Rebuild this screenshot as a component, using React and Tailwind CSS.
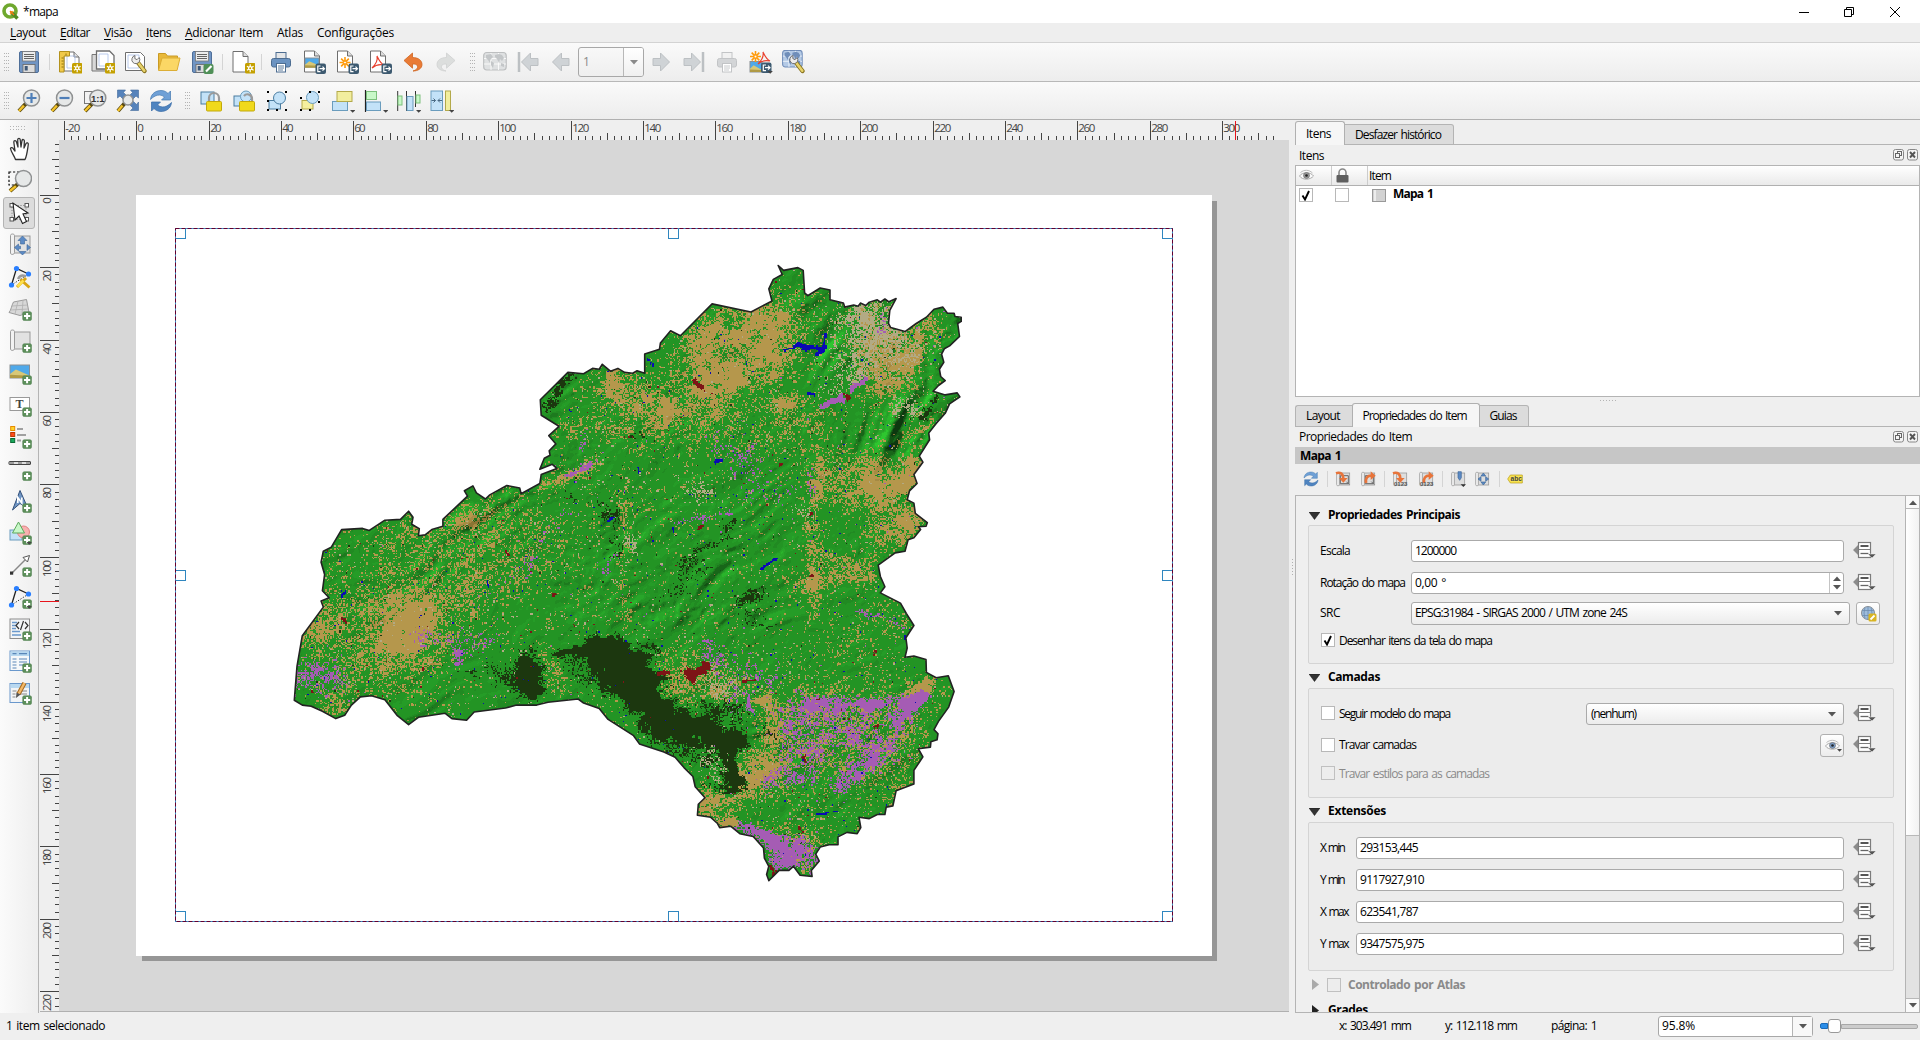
import React, { useLayoutEffect, useMemo, useRef } from 'react';

/* ---------- text fitted to a given width through letter spacing ---------- */
function T({ w, className = '', children }) {
  const ref = useRef(null);
  useLayoutEffect(() => {
    const el = ref.current;
    if (!el || !w) return;
    el.style.letterSpacing = '0px';
    const natural = el.getBoundingClientRect().width;
    const n = el.textContent.length;
    el.style.letterSpacing = (w - natural) / n + 'px';
  }, [w]);
  return <span ref={ref} className={'inline-block whitespace-pre [word-spacing:1.3px] ' + className}>{children}</span>;
}

/* ---------- shared icon parts ---------- */
const Svg = ({ s = 24, children, className = '' }) => (
  <svg width={s} height={s} viewBox="0 0 24 24" fill="none" className={'shrink-0 ' + className}>{children}</svg>
);
const Star = ({ x = 14, y = 13 }) => (
  <g transform={`translate(${x} ${y})`}>
    <rect width="10.5" height="10.5" rx="1.5" fill="#c4a000" />
    <path d="M5.2 1.3v8M1.9 3.2l6.7 4M8.6 3.2l-6.7 4" stroke="#fff" strokeWidth="1.2" />
    <circle cx="5.2" cy="5.2" r="2.1" fill="#fff" /><circle cx="5.2" cy="5.2" r="1" fill="#c4a000" />
  </g>
);
const Plus = ({ x = 14.5, y = 14.5 }) => (
  <g transform={`translate(${x} ${y})`}>
    <rect x=".2" y=".2" width="8.8" height="8.8" rx="1.5" fill="#5c8f5a" stroke="#4b7d4a" strokeWidth=".5" />
    <path d="M4.6 1.5v6.2M1.5 4.6h6.2" stroke="#fff" strokeWidth="2" />
  </g>
);
const Exp = ({ x = 13.5, y = 13.5 }) => (
  <g transform={`translate(${x} ${y})`}>
    <rect width="10.5" height="10.5" rx="2" fill="#3d5a70" />
    <path d="M5 2.5H2.3v5.6H5M4 5.2h5M7 3.2l2 2-2 2" stroke="#fff" strokeWidth="1.2" />
  </g>
);
const Lens = ({ cx = 14.5, cy = 9, r = 8 }) => (
  <g>
    <path d={`M${cx - r * 0.7} ${cy + r * 0.7}L2 22`} stroke="#5a4a10" strokeWidth="4" />
    <path d={`M${cx - r * 0.7 - 2} ${cy + r * 0.7 + 2}L2 22`} stroke="#f4c32a" strokeWidth="2.4" />
    <circle cx={cx} cy={cy} r={r} fill="#e6e8e8" stroke="#8f9192" strokeWidth="1.5" />
  </g>
);
const Page = ({ x = 3, y = 1, w = 15, h = 21 }) => (
  <g>
    <path d={`M${x} ${y}h${w - 5}l5 5v${h - 5}h-${w}z`} fill="#fff" stroke="#6e6e6e" />
    <path d={`M${x + w - 5} ${y}v5h5`} fill="#ddd" stroke="#6e6e6e" />
  </g>
);
const Drop = ({ x = 19, y = 21 }) => <path d={`M${x} ${y}h5.4l-2.7 2.8z`} fill="#444" />;

const Wrench = () => (
  <g>
    <path d="M13.5 12l7 9" stroke="#8a7420" strokeWidth="4.4" strokeLinecap="round" />
    <path d="M14 12.5l6.3 8.2" stroke="#e8d36a" strokeWidth="2.6" strokeLinecap="round" />
    <path d="M8 8.5a4 4 0 0 1 3-3l-.2 3 2.2 1.2 2.2-2.2a4 4 0 1 1-7.200 1z" fill="#ececec" stroke="#666" strokeWidth=".9" />
  </g>
);
const Floppy = () => (
  <g>
    <rect x="2.5" y="1.500" width="19" height="21" rx="1.500" fill="#7095c4" stroke="#4f6f99" />
    <rect x="5.500" y="1.500" width="13" height="9.500" fill="#eceded" stroke="#777" strokeWidth=".8" />
    <path d="M7 4.500h10M7 6.500h10M7 8.500h10" stroke="#555" strokeWidth=".9" />
    <rect x="6" y="14.500" width="12" height="8" fill="#dcdcdc" stroke="#666" strokeWidth=".8" />
    <rect x="7.700" y="16" width="3" height="4.500" fill="#3e5877" />
  </g>
);
const Refresh = () => (
  <g>
    <path d="M1.500 10.500C2 4.500 7 1.500 12 1.500c3.500 0 5.500 1.500 7 3l2.500-2.500V11h-9l3-3C11 4.500 6 6 1.500 10.500z" fill="#6fa0d6" stroke="#4478b0" strokeWidth=".7" />
    <path d="M22.500 13.500c-.5 6-5.500 9-10.500 9-3.500 0-5.500-1.500-7-3L2.500 22v-9h9l-3 3c4.500 3.500 9.500 2 14-2.500z" fill="#4f84c0" stroke="#386ca6" strokeWidth=".7" />
  </g>
);
const Landscape = ({ x, y, w, h }) => (
  <g>
    <rect x={x} y={y} width={w} height={h} fill="#4fa9ea" stroke="#8a8f94" />
    <path d={`M${x} ${y + h * 0.7}L${x + w * 0.3} ${y + h * 0.35}L${x + w} ${y + h * 0.8}V${y + h}H${x}z`} fill="#d8c877" />
    <path d={`M${x} ${y + h * 0.75}L${x + w} ${y + h * 0.82}V${y + h}H${x}z`} fill="#b09a45" />
  </g>
);
const MapGrid = ({ c1, c2, c3 }) => (
  <g>
    <rect x=".7" y="2.500" width="22.500" height="17.500" rx="3" fill={c1} stroke={c2} strokeWidth="1.200" />
    <path d="M8 3v17M15.500 3v17M1 8.500h22M1 14h22" stroke="#fff" strokeWidth=".8" />
    <path d="M3 5l5-1 2 3-3 3v3l-2-3-2-2zM8 11l3 2-1 5-2-3zM12 5l4-1 3 1 2 3-2 3-2-2-1 4-2-4-2-2zM18 13l3 1v3l-3-1z" fill={c3} />
  </g>
);
const Arrow = ({ dir, bar }) => (
  <g transform={dir === 'r' ? 'translate(24 0) scale(-1 1)' : undefined}>
    <path d="M3.500 12l9-9v5.500h7.500v7h-7.500V21z" fill="#cfd3d6" stroke="#bcc0c3" strokeWidth="1" transform={bar ? 'translate(2 0)' : undefined} />
    {bar && <path d="M3 2v20" stroke="#bcc0c3" strokeWidth="2.500" />}
  </g>
);
const Printer = ({ a, b, c }) => (
  <g>
    <rect x="7" y="2.500" width="10" height="8" fill={c} stroke={b} />
    <rect x="2.500" y="8.500" width="19" height="8.500" rx="2" fill={a} stroke={b} />
    <rect x="7.500" y="13.500" width="9" height="8.500" fill="#fff" stroke={b} />
    <path d="M9 16h6M9 18h6M9 20h5" stroke={b} strokeWidth=".9" />
  </g>
);
const Nodes = () => (
  <g>
    <path d="M3.500 20L8.500 3.500L20.500 9" stroke="#222" strokeWidth="1.300" />
    <path d="M20.500 9L3.500 20" stroke="#222" strokeDasharray="1.200 1.600" />
    <g fill="#2a7fff"><circle cx="3.500" cy="20" r="2.600" /><circle cx="8.500" cy="3.500" r="2.600" /><circle cx="20.500" cy="9" r="2.600" /></g>
  </g>
);
const Scroll = () => (
  <g>
    <rect x="4.500" y="3" width="17.500" height="17" fill="#e2e2e2" stroke="#9a9a9a" />
    <path d="M2.500 2.500c0-2 4-2 4 0v17c0 2.500-4 2.500-4 .5z" fill="#f2f2f2" stroke="#9a9a9a" />
  </g>
);
const Dots = ({ at }) => <g fill="#000">{at.map(([x, y]) => <rect key={x + '-' + y} x={x} y={y} width="2" height="2" />)}</g>;
const Burst = ({ x, y, r }) => (
  <g transform={`translate(${x} ${y}) scale(${r / 6})`}>
    <path d="M0-6V6M-6 0H6M-4.200-4.200l8.400 8.400M4.200-4.200l-8.400 8.400" stroke="#ff9a0a" strokeWidth="1.700" /><circle r="1.500" fill="#fff" stroke="#ff9a0a" />
  </g>
);
const Acro = ({ x, y }) => (
  <path transform={`translate(${x} ${y})`} d="M5 0c2 4 3 7 7 9-4-1-8-.5-12 3 3-3 6-8 5-12z" stroke="#e8402e" strokeWidth="1.200" />
);

/* ---------- toolbar icons ---------- */
const I = {
  save: <Floppy />,
  newLayout: <><Page x={6} y={2} w={15} h={19} /><path d="M9 6h8v12H9z" stroke="#a9bfe8" strokeWidth=".8" /><path d="M1.500 1.500h10v4.500H6v16H1.500z" fill="#f0c94a" stroke="#b4921c" /><path d="M3.500 8h2M3.500 11h2M3.500 14h2M3.500 17h2M8 3.500v2" stroke="#7a6000" strokeWidth=".8" /><Star /></>,
  duplicate: <><path d="M1 4.500h16V21H1z" fill="#d8d8d8" stroke="#777" /><path d="M5.500 1h13l4.500 4.500V19H5.500z" fill="#fff" stroke="#6e6e6e" strokeWidth="1.300" /><path d="M8 4h9v12H8z" stroke="#a9bfe8" strokeWidth=".8" /><Star /></>,
  manager: <><path d="M1.500 2.500h15l4 4v14h-19z" fill="#fff" stroke="#6e6e6e" /><path d="M4 5h11v13H4z" stroke="#a9bfe8" strokeWidth=".8" /><Wrench /></>,
  open: <><path d="M1.500 20V3.500h7l2 2.500h10V10" fill="#e9b93a" stroke="#c99a24" /><path d="M1.500 20.500L5 8h18l-3 12.500z" fill="#fbd765" stroke="#dcae35" /></>,
  saveTpl: <><Floppy /><rect x="13.500" y="14" width="10" height="10" rx="2" fill="#4f8f57" /><path d="M16 21.500l5.500-5.500" stroke="#fff" strokeWidth="2.200" /></>,
  addPage: <><Page x={2} y={1.500} w={15} h={20.500} /><Star /></>,
  print: <Printer a="#6b93c1" b="#4d6d91" c="#e4e6e8" />,
  image: <><Page x={2.500} /><Landscape x={3} y={8} w={14} h={9.500} /><Exp /></>,
  svg: <><Page x={2.500} /><Burst x={10} y={12.500} r={5.500} /><Exp /></>,
  pdf: <><Page x={2.500} /><Acro x={4} y={6} /><Exp /></>,
  undo: <path d="M3 10.500L11.500 3v4.500c6 0 9.500 3 9.500 7 0 4-4 6.500-9 6.500 3.500-1 5-3 4.500-5-.4-1.700-2.500-2-5-2v4.200z" fill="#e97b36" stroke="#cf6420" strokeWidth=".8" />,
  redo: <path transform="translate(24 0) scale(-1 1)" d="M3 10.500L11.500 3v4.500c6 0 9.500 3 9.500 7 0 4-4 6.500-9 6.500 3.500-1 5-3 4.500-5-.4-1.700-2.500-2-5-2v4.200z" fill="#dcdedd" stroke="#cfd1d0" strokeWidth=".8" />,
  atlas: <MapGrid c1="#dfe1e2" c2="#bdbfc0" c3="#c3c6c8" />,
  first: <Arrow dir="l" bar />, prev: <Arrow dir="l" />, next: <Arrow dir="r" />, last: <Arrow dir="r" bar />,
  printOff: <Printer a="#d3d5d7" b="#c2c4c6" c="#f1f1f1" />,
  exportAtlas: <><Landscape x={1} y={11.500} w={12} h={10.500} /><Burst x={6.500} y={6.500} r={5.500} /><Acro x={9} y={2} /><Exp x={12} y={12.500} /><Drop x={18.500} y={21} /></>,
  atlasCfg: <><g transform="translate(0 -2) scale(.87 .95)"><MapGrid c1="#b4cae6" c2="#6f8cb8" c3="#6f8eba" /></g><Wrench /></>,
  zin: <><Lens /><path d="M14.500 4v10M9.500 9h10" stroke="#4f7fb8" strokeWidth="2.200" /></>,
  zout: <><Lens /><path d="M9.500 9h10" stroke="#4f7fb8" strokeWidth="2.200" /></>,
  z11: <><rect x="1.500" y="2.500" width="14" height="12" fill="#f2f2f2" stroke="#777" /><Lens cx={14.800} /><text x="14.800" y="12.600" textAnchor="middle" fontSize="9.500" fontWeight="700" fontFamily="Liberation Sans, sans-serif" fill="#333">1:1</text></>,
  zfull: <><g fill="#5683bb" stroke="#42699a" strokeWidth=".6"><path d="M1.500 1h8L7.500 3.500l3 3L7 10 4 7 1.500 9zM22.500 1v8L20 7l-3 3-3.500-3.500 3-3L14.500 1zM22.500 21.500h-8l2.500-2.500-3-3 3.500-3.500 3 3 2-2.500z" /></g><Lens cx={12} cy={11} r={5} /></>,
  refresh: <Refresh />,
  lock: <><rect x="2" y="3" width="13" height="12" fill="#c3e2f8" stroke="#4a7ca0" /><path d="M10 13V9a5 5 0 0 1 10 0v4" stroke="#9a9a9a" strokeWidth="2.200" /><rect x="7.500" y="12.500" width="15" height="9.500" rx="1" fill="#f0d91c" stroke="#c2a90a" /></>,
  unlock: <><rect x="2" y="7" width="9" height="10" fill="#c3e2f8" stroke="#4a7ca0" /><circle cx="14" cy="7.500" r="5.500" fill="#c3e2f8" stroke="#6a9cbd" /><path d="M20 13V10a4.500 4.500 0 0 0-8-3" stroke="#9a9a9a" strokeWidth="2.200" /><rect x="7.500" y="12.500" width="15" height="9.500" rx="1" fill="#f0d91c" stroke="#c2a90a" /></>,
  group: <><rect x="4" y="11.500" width="11.500" height="8.500" fill="#c3e2f8" stroke="#4a7ca0" /><circle cx="14.500" cy="9" r="6" fill="#c3e2f8" stroke="#4a7ca0" /><Dots at={[[2, 2], [20, 2], [2, 20], [11, 20], [20, 20], [2, 11]]} /></>,
  ungroup: <><rect x="4" y="11.500" width="11" height="8.500" fill="#f4ef9e" stroke="#b3a94a" /><circle cx="14.500" cy="8.500" r="6" fill="#c3e2f8" stroke="#6a9cbd" /><Dots at={[[11, 2], [20, 2], [20, 12], [2, 8], [2, 20], [11, 20]]} /></>,
  raise: <><rect x="1.500" y="12.500" width="15" height="9" fill="#c3e2f8" stroke="#6a9cbd" /><rect x="6" y="2.500" width="15" height="10" fill="#f2ee9e" stroke="#b3a94a" /><Drop /></>,
  align: <><path d="M1.500 1v22" stroke="#222" strokeWidth="1.200" /><rect x="2.500" y="2.500" width="10" height="8" fill="#c8f8c8" stroke="#7cc07c" /><rect x="2.500" y="13" width="14" height="8.500" fill="#c3e2f8" stroke="#6a9cbd" /><Drop /></>,
  dist: <><path d="M.7 2v20M9.500 2v20M18.500 2v16" stroke="#333" /><rect x="1" y="7" width="4" height="9" fill="#c8f8c8" stroke="#7cc07c" /><rect x="10" y="7.500" width="6" height="14" fill="#c3e2f8" stroke="#6a9cbd" /><rect x="19" y="6" width="4" height="8" fill="#c8f8c8" stroke="#7cc07c" /><Drop /></>,
  resize: <><rect x="1" y="2" width="11.500" height="19.500" fill="#c3e2f8" stroke="#6a9cbd" /><rect x="15.500" y="2" width="5" height="19.500" fill="#f2ee9e" stroke="#b3a94a" /><path d="M1.500 11.500h4M3.500 9.500l2 2-2 2M12 11.500H8M10 9.500l-2 2 2 2" stroke="#4a6a84" /><Drop /></>,
  hand: <path d="M7.500 22.500C6.500 19 3 15 2.500 11.500c.3-1.500 2.200-1 3 .5l1.500 2L5.800 5c0-1.800 2.200-1.900 2.600-.2L10 10l-.3-7.500c.2-1.500 2.300-1.500 2.500 0L13 10l1-6.500c.4-1.500 2.400-1.200 2.400.4L16 11l2-4.500c.8-1.300 2.600-.5 2.300 1-.8 5-1.300 11-3.300 15z" fill="#fff" stroke="#333" strokeWidth="1.300" strokeLinejoin="round" />,
  zoomBox: <><rect x="1" y="3" width="14" height="13" stroke="#111" strokeDasharray="2.200 1.800" strokeWidth="1.200" /><Lens cx={15.500} cy={9.500} r={8} /></>,
  select: <><rect x="4" y="4.500" width="14" height="14" stroke="#888" strokeDasharray="1.200 1.600" /><g fill="#fff" stroke="#555"><rect x="2" y="2.500" width="3.500" height="3.500" /><rect x="17" y="2.500" width="3.500" height="3.500" /><rect x="2" y="16.500" width="3.500" height="3.500" /><rect x="17" y="16.500" width="3.500" height="3.500" /></g><path d="M5 2l2 17 4-4 3.500 7.500 4-2L15 13l5-1z" fill="#fff" stroke="#222" strokeWidth="1.100" /></>,
  moveContent: <><Scroll /><path d="M14.500 3l4.500 4.500h-2.500V11h-4V7.500H10zM6.500 14.500l4-3.500v2.200h2v2.600h-2V18zM22.500 14.500l-3.500-3v6zM14.500 22l-3.500-3.500h7z" fill="#5c8ac4" stroke="#3c6698" strokeWidth=".6" /></>,
  editNodes: <><Nodes /><path d="M9 22l9-9M12.500 14.500l9 8" stroke="#d9a514" strokeWidth="3" /><path d="M9.500 21.500l6-6" stroke="#ffe04a" strokeWidth="2.600" /><path d="M10 14c2-4 5-4 8-2.500" stroke="#9a9a9a" strokeWidth="2.400" /></>,
  map3d: <><path d="M5.500 5l13-2.500L21 15.500l-9 3-11-3c2-2 2.500-7 4.500-10.500z" fill="#d8d8d8" stroke="#9a9a9a" /><path d="M4 9l16-1M2.500 13l18-1M10 4L7 17M15 3.500L14 17" stroke="#b0b0b0" strokeWidth=".8" /><Plus /></>,
  addMap: <><Scroll /><Plus /></>,
  picture: <><Landscape x={2} y={4} w={19.500} h={13} /><Plus /></>,
  label: <><rect x="2" y="4.500" width="19.500" height="13" fill="#fff" stroke="#999" /><text x="11.500" y="15" textAnchor="middle" fontSize="12" fontFamily="Liberation Serif, serif" fontWeight="700" fill="#444">T</text><Plus /></>,
  legend: <><rect x="2.700" y="1.500" width="4" height="4" fill="#ffd42a" stroke="#e88a00" /><rect x="2.700" y="7.500" width="4" height="4" fill="#ff4a1a" stroke="#b83a00" /><rect x="2.700" y="13.500" width="4" height="4" fill="#18a85a" stroke="#0a6a34" /><path d="M9 4h6M9 10h9M9 15.500h4" stroke="#a0a0a0" strokeWidth="1.800" /><Plus /></>,
  scalebar: <><rect x="1" y="4.500" width="21.500" height="3" rx=".5" fill="#ddd" stroke="#444" /><path d="M2 6h4M10 6h4M18 6h4" stroke="#8a8a8a" strokeWidth="1.600" /><Plus /></>,
  north: <><path d="M12 1.500l8 18-8-5-7.500 6.500z" fill="#6f95c4" stroke="#33507a" /><path d="M9.800 14V8.500l4 5.500V8.500" stroke="#fff" strokeWidth="1.600" /><Plus /></>,
  shape: <><rect x="2" y="9" width="12" height="10" fill="#c3e2f8" stroke="#6a9cbd" /><circle cx="15.500" cy="11" r="6" fill="#f8b0b0" stroke="#e08080" /><path d="M10.500 1l6 11h-12z" fill="#c8f8c8" stroke="#5ca85c" /><Plus /><Drop x={18.500} y={21} /></>,
  arrow: <><path d="M4 20L20 4" stroke="#888" strokeWidth="1.500" /><path d="M21.500 2.500l-6.500 2 4.500 4.500z" fill="#fff" stroke="#555" /><rect x="2" y="18.500" width="3.200" height="3.200" fill="#333" /><Plus /></>,
  addNode: <><Nodes /><Plus /><Drop x={18.500} y={21} /></>,
  html: <><rect x="2" y="2" width="19.500" height="19.500" fill="#f2f4f6" stroke="#8c8c8c" /><path d="M4 5.500h5M4 8.500h5M4 11.500h4M4 14.500h8M4 18h9" stroke="#6a98cc" strokeWidth="1.500" /><path d="M11 5L8 8.500l3 3.500M17 5l3 3.500-3 3.500M15.500 4l-3 9" stroke="#333" strokeWidth="1.200" /><Plus /></>,
  table: <><rect x="2" y="2" width="19.500" height="19.500" fill="#f6f8fa" stroke="#6a98cc" /><rect x="2.500" y="2.500" width="18.500" height="4.500" fill="#b8d8f0" /><path d="M4.500 4.700h4M11 4.700h8M4.500 10h4M11 10h8M4.500 13h4M11 13h8M4.500 16h4M11 16h5M4.500 19h4" stroke="#5a86b8" strokeWidth="1.200" /><Plus /></>,
  manual: <><rect x="2" y="2.500" width="19.500" height="19" fill="#f2f4f6" stroke="#6a98cc" /><rect x="2.500" y="3" width="18.500" height="4" fill="#b8d8f0" /><path d="M4.500 10h4M4.500 13h3M12 10h7M12 13h7M4.500 16h3" stroke="#888" strokeWidth="1.100" /><path d="M16.500 2l-6 11" stroke="#a66a20" strokeWidth="4.500" /><path d="M16.500 2l-6 11" stroke="#f2b868" strokeWidth="2.400" /><path d="M8.500 11.500l4 2-4.500 3.500z" fill="#555" /><Plus /></>,
};

const Cell = ({ n }) => <div className="flex w-[33px] shrink-0 items-center justify-center"><Svg>{I[n]}</Svg></div>;
const Sep = ({ w }) => <div className={'flex shrink-0 justify-center ' + w}><div className="h-4 w-px bg-[#d4d4d4]" /></div>;
const Grip = ({ className = '' }) => (
  <div className={'grid h-[18px] shrink-0 grid-cols-3 content-between ' + className}>
    {Array.from({ length: 18 }, (_, i) => <div key={i} className="size-px bg-[#b4b4b4]" />)}
  </div>
);

/* ---------- rulers ---------- */
function Rulers() {
  const hor = [];
  for (let v = -20; v <= 314; v += 2) hor.push(v);
  const ver = [];
  for (let v = -14; v <= 224; v += 2) ver.push(v);
  const len = (v) => (v % 20 === 0 ? 19 : v % 10 === 0 ? 7 : 4);
  return {
    top: (
      <svg width="1249" height="19" viewBox="40 121 1249 19" className="block shrink-0">
        {hor.map((v) => {
          const x = Math.floor(136.700 + v * 3.620) + 0.5;
          return <g key={v}>
            <path d={`M${x} ${140 - len(v)}V140`} stroke="#444" />
            {v % 20 === 0 && <text x={x + 0.8} y="132" fontSize="11.500" textLength={v < 0 ? 15 : String(v).length * 5.700} fontFamily="'Open Sans', sans-serif" fill="#444">{v}</text>}
          </g>;
        })}
        <path d="M1235.500 121v19" stroke="#e8141c" />
      </svg>
    ),
    left: (
      <svg width="19" height="871" viewBox="40 140 19 871" className="block shrink-0">
        {ver.map((v) => {
          const y = Math.floor(195.300 + v * 3.620) + 0.5;
          return <g key={v}>
            <path d={`M${59 - len(v)} ${y}H59`} stroke="#444" />
            {v % 20 === 0 && <text transform={`translate(51 ${y + 2.500 + String(v).length * 5.700}) rotate(-90)`} fontSize="11.500" textLength={String(v).length * 5.700} fontFamily="'Open Sans', sans-serif" fill="#444">{v}</text>}
          </g>;
        })}
        <path d="M40 601.500h19" stroke="#e8141c" />
      </svg>
    ),
  };
}

/* ---------- raster map: land cover over shaded relief ---------- */
const OUT = '1116,38 1128,50 1160,43 1172,50 1175,105 1182,112 1210,93 1232,98 1232,122 1262,130 1265,140 1285,135 1295,138 1300,130 1312,136 1320,128 1338,122 1345,128 1355,120 1364,127 1380,119 1366,148 1363,180 1368,190 1400,200 1425,180 1448,165 1465,145 1485,140 1495,155 1510,155 1512,163 1526,165 1526,175 1518,180 1522,212 1500,235 1488,242 1482,255 1487,275 1477,292 1480,310 1490,320 1475,332 1463,346 1490,355 1517,350 1523,360 1500,377 1490,400 1470,425 1453,448 1455,465 1432,505 1440,520 1420,550 1427,572 1410,590 1405,612 1420,620 1423,645 1450,668 1447,677 1430,678 1435,685 1420,705 1407,710 1400,738 1378,742 1340,772 1345,800 1355,825 1345,840 1390,865 1403,890 1420,920 1402,950 1405,975 1400,998 1420,995 1447,1003 1448,1035 1470,1048 1497,1043 1510,1082 1498,1120 1475,1155 1465,1175 1474,1185 1472,1200 1458,1205 1457,1218 1430,1222 1440,1242 1420,1275 1420,1308 1380,1325 1373,1362 1358,1365 1355,1383 1338,1383 1320,1393 1297,1390 1301,1415 1293,1430 1270,1427 1250,1438 1250,1457 1230,1457 1210,1463 1200,1480 1208,1497 1190,1520 1192,1535 1165,1532 1150,1510 1140,1520 1118,1520 1095,1545 1090,1530 1095,1510 1085,1490 1083,1465 1060,1437 1030,1430 1010,1412 985,1415 980,1405 965,1390 935,1385 937,1358 952,1342 930,1315 925,1290 905,1268 885,1243 860,1230 805,1210 792,1190 735,1150 715,1123 680,1110 668,1100 600,1108 575,1115 530,1115 505,1122 435,1132 418,1152 385,1148 370,1135 310,1145 288,1163 262,1140 235,1102 205,1092 180,1095 160,1115 145,1140 125,1148 95,1130 70,1118 50,1115 32,1103 38,1020 50,945 97,875 92,860 110,852 95,835 100,795 92,765 97,738 115,728 138,685 185,682 200,687 235,662 270,660 288,640 298,655 295,672 312,683 310,700 325,698 340,685 365,677 365,660 420,603 413,590 432,578 440,595 460,610 470,600 508,577 537,583 540,597 582,572 585,550 620,535 610,525 582,537 592,510 605,503 603,492 618,475 602,455 625,432 585,405 583,367 645,300 680,303 700,290 715,292 722,280 740,297 757,290 772,300 790,302 800,296 817,302 817,255 850,243 852,228 875,198 897,210 968,132 1055,152 1102,125 1095,95 1105,72 1125,60';
const POLY = OUT.split(' ').map((p) => { const [a, b] = p.split(',').map(Number); return [a / 2.24, b / 2.45]; });

// capsules: x1, y1, x2, y2, radius, peak
const TAN = [[960, 290, 1090, 190, 75, 0.8], [940, 200, 1080, 170, 45, 0.4], [740, 320, 745, 350, 32, 0.8], [830, 370, 940, 370, 55, 0.6], [1000, 330, 1080, 300, 50, 0.5], [1340, 170, 1350, 300, 55, 0.7], [1400, 270, 1440, 190, 30, 0.8], [1390, 560, 1415, 530, 28, 0.9], [1230, 560, 1300, 560, 55, 0.55], [1320, 590, 1400, 640, 45, 0.6], [1350, 700, 1390, 690, 40, 0.45], [1130, 380, 1150, 370, 22, 0.7], [1200, 400, 1190, 900, 14, 0.4], [1150, 810, 1320, 790, 28, 0.5], [1180, 740, 1330, 780, 12, 0.35], [80, 910, 280, 940, 80, 0.5], [200, 1000, 330, 880, 80, 0.3], [420, 650, 425, 665, 20, 0.7], [300, 850, 560, 720, 110, 0.28], [590, 580, 720, 515, 12, 0.7], [960, 1350, 1090, 1280, 38, 0.85], [1180, 1180, 1320, 1200, 130, 0.45], [1400, 1090, 1440, 1060, 16, 0.8], [1380, 470, 1460, 420, 12, 0.8], [985, 1400, 1010, 1400, 15, 0.8], [130, 1090, 110, 1120, 30, 0.4], [880, 1050, 1000, 1080, 60, 0.45], [436, 870, 436, 890, 6, 1.300], [1130, 1440, 1190, 1480, 40, 0.4], [600, 970, 600, 1060, 14, 0.5], [640, 440, 860, 400, 30, 0.4], [770, 560, 770, 900, 14, 0.3], [840, 440, 1180, 440, 60, 0.22], [250, 700, 500, 640, 50, 0.22], [1240, 950, 1380, 900, 40, 0.2], [1090, 1090, 1110, 1200, 18, 0.4], [300, 900, 300, 1100, 60, 0.15]];
const GREY = [[1310, 160, 1350, 160, 50, 0.75], [1280, 230, 1400, 240, 60, 0.45], [960, 1250, 980, 1270, 30, 0.6], [780, 700, 785, 730, 14, 0.6], [930, 580, 950, 600, 24, 0.55], [1240, 340, 1300, 290, 30, 0.5], [980, 1060, 1000, 1070, 45, 0.4], [1400, 380, 1410, 385, 22, 0.6], [1170, 630, 1190, 640, 16, 0.5]];
const PUR = [[50, 1040, 110, 1040, 38, 0.8], [1180, 1110, 1320, 1110, 22, 0.85], [1320, 1110, 1440, 1095, 13, 0.9], [1380, 1150, 1440, 1090, 15, 1.300], [1150, 1150, 1180, 1240, 55, 0.55], [1260, 1180, 1350, 1200, 60, 0.55], [1260, 1310, 1320, 1250, 25, 0.9], [1090, 1300, 1180, 1290, 22, 0.7], [1105, 1450, 1130, 1490, 27, 1.350], [1030, 1410, 1090, 1430, 13, 1.300], [1160, 1460, 1190, 1490, 28, 0.7], [1216, 377, 1250, 360, 9, 2.500], [1280, 340, 1303, 320, 8, 1.800], [1045, 1080, 1058, 1135, 7, 1.500], [1000, 1010, 1100, 1040, 35, 0.45], [980, 480, 1060, 520, 40, 0.36], [890, 665, 1000, 650, 8, 0.75], [1060, 600, 1130, 590, 40, 0.26], [395, 980, 398, 1010, 12, 0.8], [320, 950, 460, 960, 30, 0.35], [1005, 1130, 1020, 1080, 18, 0.6], [640, 550, 710, 520, 6, 0.9], [1340, 190, 1366, 140, 8, 0.8], [725, 790, 750, 740, 6, 0.8], [1195, 530, 1190, 600, 8, 0.6], [950, 970, 960, 1000, 25, 0.5], [550, 790, 575, 750, 8, 0.7], [1290, 880, 1400, 920, 6, 0.6], [680, 440, 680, 490, 6, 0.7], [640, 640, 420, 900, 12, 0.25]];
const DRK = [[640, 978, 730, 972, 15, 1.600], [745, 1000, 800, 1060, 38, 2.600], [800, 1085, 835, 1130, 26, 2.600], [850, 1165, 970, 1185, 20, 2.600], [985, 1195, 1030, 1190, 14, 1.500], [1000, 1225, 1020, 1310, 20, 0.95], [550, 1000, 560, 1060, 28, 1.150], [480, 1030, 540, 1080, 32, 0.5], [640, 1020, 720, 1060, 34, 0.36], [960, 1120, 1030, 1140, 30, 0.5], [850, 1200, 960, 1250, 28, 0.42], [640, 600, 740, 620, 26, 0.32], [745, 640, 750, 750, 15, 0.45], [890, 790, 1010, 690, 20, 0.55], [1030, 850, 1060, 840, 20, 0.65], [1040, 900, 1100, 920, 18, 0.45], [595, 370, 640, 320, 16, 0.7], [820, 960, 840, 985, 18, 0.55], [1420, 410, 1470, 370, 12, 0.8], [960, 1310, 1010, 1300, 16, 0.55], [870, 1120, 920, 1150, 14, 0.5], [780, 450, 840, 455, 8, 0.4], [840, 850, 960, 790, 20, 0.4], [425, 1030, 430, 1038, 6, 0.9], [1090, 1150, 1110, 1200, 12, 0.4], [700, 1000, 1010, 1190, 50, 0.25]];
const BLU = [[1125, 240, 1160, 232, 2.500, 1.500], [1155, 230, 1180, 242, 4.500, 2], [1180, 240, 1212, 242, 4.500, 2], [1200, 255, 1216, 240, 4.500, 2], [1214, 235, 1215, 205, 3.500, 1.800], [1182, 350, 1193, 354, 5, 2], [973, 516, 988, 510, 4, 3], [1080, 778, 1086, 766, 3, 2], [1086, 766, 1108, 754, 2.500, 3], [822, 265, 828, 285, 6, 0.9], [802, 530, 802, 542, 2.500, 2], [143, 832, 140, 845, 3, 2], [1200, 1382, 1245, 1375, 3, 1], [735, 660, 740, 652, 3, 2], [880, 675, 882, 685, 3, 1.500], [461, 805, 463, 820, 3, 1.200], [1397, 940, 1398, 950, 3, 2]];
const RED = [[928, 315, 944, 332, 8, 1.500], [918, 1040, 945, 1020, 12, 1.200], [848, 1040, 862, 1030, 8, 0.9], [925, 1050, 938, 1100, 8, 0.6], [860, 1035, 960, 1035, 16, 0.42], [1040, 1048, 1062, 1048, 5, 0.9], [1266, 356, 1270, 360, 5, 2.200], [132, 905, 140, 907, 5, 1.200], [938, 677, 945, 677, 5, 1.200], [1172, 1238, 1176, 1250, 5, 1.100], [1330, 1158, 1331, 1162, 5, 1.100], [1203, 1100, 1204, 1100, 5, 1.100], [1188, 640, 1189, 645, 4, 1.200], [1118, 522, 1118, 525, 4, 1.200], [72, 1078, 73, 1080, 4, 1.200], [312, 1018, 313, 1020, 4, 1.200], [1102, 1510, 1106, 1530, 6, 0.9], [1326, 985, 1328, 992, 5, 0.9], [1160, 1410, 1161, 1425, 4, 0.9], [510, 742, 511, 744, 3, 1.500], [654, 918, 655, 920, 3, 1.500], [610, 842, 611, 844, 3, 1.500], [770, 454, 790, 456, 3, 0.8], [1185, 800, 1187, 802, 3, 1.500]];

function hash(x, y, s) {
  let h = Math.imul(x, 374761393) + Math.imul(y, 668265263) + Math.imul(s, 1442695041);
  h = Math.imul(h ^ (h >>> 13), 1274126177);
  return ((h ^ (h >>> 16)) >>> 0) / 4294967296;
}
function noise(x, y, s) {
  const xi = Math.floor(x), yi = Math.floor(y);
  let fx = x - xi, fy = y - yi;
  fx = fx * fx * (3 - 2 * fx); fy = fy * fy * (3 - 2 * fy);
  const a = hash(xi, yi, s), b = hash(xi + 1, yi, s), c = hash(xi, yi + 1, s), d = hash(xi + 1, yi + 1, s);
  return a + (b - a) * fx + (c - a) * fy + (a - b - c + d) * fx * fy;
}
function density(list, x, y) {
  let p = 0;
  for (const [x1, y1, x2, y2, r, k] of list) {
    const dx = x2 - x1, dy = y2 - y1;
    let t = ((x - x1) * dx + (y - y1) * dy) / (dx * dx + dy * dy || 1);
    t = t < 0 ? 0 : t > 1 ? 1 : t;
    const ex = x - x1 - t * dx, ey = y - y1 - t * dy;
    const q = (ex * ex + ey * ey) / (r * r);
    if (q < 6) p += k * Math.exp(-q);
  }
  return p;
}
function elevation(x, y, steep) {
  const wx = x + 40 * noise(x / 70, y / 70, 3), wy = y + 44 * noise(x / 64, y / 64, 4);
  const a = steep ? -1.150 : -0.480;
  const c = Math.cos(a), s = Math.sin(a);
  const u = wx * c + wy * s, v = -wx * s + wy * c;
  return 7 * noise(u / 60, v / 13, 5) + 3.600 * noise(u / 20, v / 7, 6) + 2.200 * noise(x / 8, y / 8, 8) + noise(x / 3.500, y / 3.500, 7);
}
const ROUGH = [[600, 520, 900, 420, 60, 0.6], [420, 680, 680, 520, 40, 0.8], [200, 860, 500, 660, 90, 0.4], [640, 860, 760, 700, 50, 0.8], [800, 860, 1060, 740, 80, 0.6], [700, 890, 1050, 880, 30, 0.6], [1180, 120, 1240, 260, 50, 1.100], [1380, 420, 1490, 200, 70, 1.300], [1270, 470, 1430, 470, 50, 1], [900, 440, 1200, 420, 50, 0.3], [1200, 740, 1340, 740, 30, 0.6], [1070, 1160, 1110, 1240, 30, 1], [1280, 1360, 1400, 1200, 60, 0.6], [480, 650, 620, 780, 60, 0.4], [900, 900, 1100, 920, 40, 0.4], [590, 400, 640, 320, 40, 0.7], [880, 640, 1060, 560, 70, 0.3]];
// relief tones, from lit slopes to shaded ones
const GREEN = [[-2.600, '#2ec62f'], [-1.700, '#2ab42b'], [-1, '#28a629'], [-0.45, '#259c27'], [0.45, '#239424'], [1, '#218a22'], [1.700, '#1d7a1e'], [2.600, '#186619'], [3.700, '#125014'], [99, '#0d380f']];

function buildMap() {
  const layers = {};
  const put = (c, x, y, n) => { (layers[c] || (layers[c] = [])).push(`M${x} ${y + 0.5}h${n}`); };
  for (let y = 10; y < 635; y++) {
    const xs = [];
    for (let i = 0; i < POLY.length; i++) {
      const [ax, ay] = POLY[i], [bx, by] = POLY[(i + 1) % POLY.length];
      if ((ay <= y) !== (by <= y)) xs.push(ax + ((y - ay) / (by - ay)) * (bx - ax));
    }
    xs.sort((a, b) => a - b);
    const cy = Math.floor(y * 0.78);
    for (let k = 0; k + 1 < xs.length; k += 2) {
      const x0 = Math.floor(xs[k]), x1 = Math.ceil(xs[k + 1]);
      let run = x0, cur = null, lastCx = -1, cover = null;
      for (let x = x0; x <= x1; x++) {
        let c = null;
        if (x < x1) {
          const cx = Math.floor(x * 0.78);
          const steep = x > 487 && y < 229 && x * 2.24 + (560 - y * 2.45) * 0.3 > 1180;
          if (cx !== lastCx) {
            lastCx = cx;
            const X = cx * 2.872, Y = cy * 3.141;
            const ox = noise(cx / 9, cy / 9, 61) + 0.5 * noise(cx / 3, cy / 3, 62) - 0.75;
            const oy = noise(cx / 9, cy / 9, 63) + 0.5 * noise(cx / 3, cy / 3, 64) - 0.75;
            const WX = X + ox * 34, WY = Y + oy * 34;
            const n1 = 0.4 * noise(cx / 1.900, cy / 1.900, 21) + 0.6 * hash(cx, cy, 11);
            const n2 = 0.4 * noise(cx / 1.900, cy / 1.900, 31) + 0.6 * hash(cx, cy, 12);
            const n3 = 0.35 * noise(cx / 1.600, cy / 1.600, 41) + 0.65 * hash(cx, cy, 13);
            const u = cx * 0.88 - cy * 0.47, v = cx * 0.47 + cy * 0.88;
            const patch = 0.05 + 0.8 * noise(u / 14, v / 7, 51) + 0.75 * noise(u / 4, v / 3, 52) + 0.35 * noise(cx / 30, cy / 30, 53);
            const drk = density(DRK, WX, WY);
            if (density(BLU, X + ox * 9, Y + oy * 9) > 0.5 + n1 * 0.6 || hash(cx, cy, 14) < 0.003) cover = '#0a0ab4';
            else if (density(RED, X + ox * 14, Y + oy * 14) > 0.3 + n2 * 0.75 || hash(cx, cy, 15) < 0.0012) cover = '#7d1416';
            else if (drk * (0.4 + 0.6 * patch) + 0.02 > 0.1 + n1 * 0.95 || n1 < 0.06) cover = '#1c370f';
            else if (density(PUR, (X + WX) / 2, (Y + WY) / 2) * patch * 0.66 + 0.05 > n2) cover = '#a55cb4';
            else if (density(GREY, WX, WY) * patch * 0.6 + 0.115 > n3) cover = '#b2aa84';
            else if ((density(TAN, WX, WY) * 0.64 + 0.09) * patch + 0.08 > n1 && drk < 0.9) cover = '#b5974c';
            else cover = null;
          }
          c = cover;
          if (!c || c === '#b5974c') {
            const amp = 0.5 + density(ROUGH, x * 2.24, y * 2.45);
            const s = (elevation(x + 0.8, y + 0.8, steep) - elevation(x - 0.8, y - 0.8, steep)) * amp;
            if (c) c = s > 2 ? '#8a7433' : s > 0.9 ? '#a58a43' : c;
            else { let i = 0; while (s > GREEN[i][0]) i++; c = GREEN[i][1]; }
          }
        }
        if (c !== cur) {
          if (cur) put(cur, run, y, x - run);
          cur = c; run = x;
        }
      }
    }
  }
  return Object.entries(layers).map(([c, d]) => [c, d.join('')]);
}
function RasterMap() {
  const layers = useMemo(buildMap, []);
  const pts = POLY.map((p) => p[0].toFixed(1) + ',' + p[1].toFixed(1)).join(' ');
  return (
    <svg width="700" height="640" viewBox="0 0 700 640" className="absolute left-[221px] top-[110px]">
      <clipPath id="area"><polygon points={pts} /></clipPath>
      <g clipPath="url(#area)">
        {layers.map(([c, d]) => <path key={c} d={d} stroke={c} fill="none" />)}
      </g>
      <polygon points={pts} fill="none" stroke="#222" strokeWidth="1.600" strokeLinejoin="round" />
    </svg>
  );
}

const H = ({ className }) => <div className={'absolute size-[11px] border border-[#2f86bf] bg-white ' + className} />;

/* ---------- form pieces ---------- */
const Check = ({ on, off, className = '' }) => (
  <div className={'flex h-[14px] w-[14px] shrink-0 items-center justify-center border ' + (off ? 'border-[#c0c0c0] bg-[#ededed] ' : 'border-[#b8b8b8] bg-white ') + className}>
    {on && <svg width="10" height="11" viewBox="0 0 10 11"><path d="M1.500 5.500l2.500 4 4-8.500" stroke="#000" strokeWidth="1.900" fill="none" /></svg>}
  </div>
);
const Tri = ({ className = '' }) => <svg width="8" height="5" viewBox="0 0 8 5" className={'shrink-0 ' + className}><path d="M0 0h8L4 4.600z" fill="currentColor" /></svg>;
const Override = ({ className = '' }) => (
  <svg width="24" height="20" viewBox="0 0 24 20" className={'shrink-0 ' + className}>
    <path d="M6 3.500v11L.5 9z" fill="#8c8c8c" stroke="#777" strokeWidth=".6" />
    <rect x="5.500" y="1.500" width="12" height="15" fill="#fff" stroke="#7c7c7c" strokeWidth="1.200" />
    <path d="M7.500 5h8" stroke="#555" strokeWidth="2" /><path d="M6 8.500h11" stroke="#7c7c7c" /><path d="M7.500 12.500h8" stroke="#666" strokeWidth="1.300" />
    <path d="M15 13h8l-4 4z" fill="#555" stroke="#efefef" strokeWidth=".5" />
  </svg>
);
const Input = ({ className = '', children }) => (
  <div className={'flex h-[22px] items-center rounded-[3px] border border-[#aaa] bg-white pl-[3px] ' + className}>{children}</div>
);
const BoxBtns = () => (
  <div className="flex gap-[3px] pr-[2px]">
    <svg width="11" height="12" viewBox="0 0 11 12"><rect x=".5" y=".5" width="10" height="10.500" rx="2" fill="#f4f4f4" stroke="#888" /><rect x="4.500" y="2.500" width="4" height="4" fill="none" stroke="#666" /><rect x="2.500" y="4.500" width="4" height="4" fill="#f4f4f4" stroke="#666" /></svg>
    <svg width="11" height="12" viewBox="0 0 11 12"><rect x=".5" y=".5" width="10" height="10.500" rx="2" fill="#f4f4f4" stroke="#888" /><path d="M3 3l5 5.500M8 3L3 8.500" stroke="#555" strokeWidth="1.900" /></svg>
  </div>
);
const Section = ({ w, children, className = '' }) => (
  <div className={'flex items-center pl-[13px] font-bold ' + className}>
    <svg width="11" height="8" viewBox="0 0 11 8" className="mr-2 mt-[2px]"><path d="M0 0h11L5.500 7.500z" fill="#333" stroke="#111" strokeWidth=".5" /></svg>
    <T w={w}>{children}</T>
  </div>
);
const Eye = ({ blue }) => (
  <svg width="15" height="13" viewBox="0 0 15 13" className="shrink-0">
    <path d="M.5 7C3 3 11.500 2.500 14.500 7c-3 4-11 4.500-14 0z" fill="#fafafa" stroke="#aaa" /><path d="M1.500 3.500C5 .5 10 .5 13.500 4" fill="none" stroke="#bbb" />
    <circle cx="7.500" cy="6.500" r="3" fill={blue ? '#7a9cc8' : '#999'} stroke="#666" strokeWidth=".6" /><circle cx="7.500" cy="6.500" r="1.300" fill="#222" />
  </svg>
);
const MiniMap = () => <><rect x="6" y="3" width="16" height="18" fill="#dedede" stroke="#9a9a9a" strokeWidth="1.200" /><rect x="2.500" y="2" width="4" height="20" rx="1.500" fill="#f4f4f4" stroke="#9a9a9a" strokeWidth="1.200" /></>;
const Mini = ({ children, w }) => <div className={'flex shrink-0 justify-center ' + w}><Svg s={16}>{children}</Svg></div>;
const frame = <path d="M8 7h12v12H8zM17 16l4 4" stroke="#666" strokeWidth="1.500" />;
const inArrow = <><path d="M1.500 3.500c7-2.500 11 1 11 8" stroke="#e8743a" strokeWidth="4" /><path d="M6 10.500h13l-6.500 7z" fill="#e8743a" /></>;
const outArrow = <><path d="M9 18c-1-7 2-11 8-11" stroke="#e8743a" strokeWidth="4" /><path d="M16 .5v13L23.500 7z" fill="#e8743a" /></>;
const coords = <text x="13" y="23" fontSize="9" fontWeight="700" textAnchor="middle" fontFamily="Liberation Sans, sans-serif" fill="#555">0123</text>;

const EXTENTS = [['X min', 24, '293153,445', 58], ['Y min', 24, '9117927,910', 64], ['X max', 28, '623541,787', 58], ['Y max', 28, '9347575,975', 64]];
const TB = 'flex shrink-0 border-b bg-linear-to-b from-[#fafafa] to-[#ededed] items-center ';

export default function App() {
  const r = Rulers();
  return (
    <div className="flex h-[1040px] w-[1920px] flex-col overflow-hidden bg-[#efefef] text-[12px] leading-[14px] text-black [font-family:'Open_Sans','Noto_Sans',sans-serif]">
      {/* title */}
      <div className="flex h-[23px] shrink-0 items-center bg-white pl-[2px]">
        <svg width="17" height="17" viewBox="0 0 17 17"><circle cx="8" cy="8" r="6" fill="none" stroke="#6fa82e" strokeWidth="3.600" /><path d="M9 9l6.500 6.500" stroke="#4f8a22" strokeWidth="3.500" /><path d="M8 8h4l-4 4z" fill="#f0a030" /><path d="M8 8l4 4" stroke="#ee7913" strokeWidth="1.500" /></svg>
        <T w={35} className="ml-[4px] mt-px">*mapa</T>
        <div className="ml-auto flex items-center pr-[20px]">
          <svg width="10" height="10" viewBox="0 0 10 10" className="mr-[35px]"><path d="M0 5.500h10" stroke="#000" /></svg>
          <svg width="10" height="10" viewBox="0 0 10 10" className="mr-[36px]"><path d="M.5 2.500h7v7h-7zM2.500 2.500v-2h7v7h-2" fill="none" stroke="#000" /></svg>
          <svg width="10" height="10" viewBox="0 0 10 10"><path d="M0 0l10 10M10 0L0 10" stroke="#000" /></svg>
        </div>
      </div>
      {/* menu */}
      <div className="flex h-5 shrink-0 items-center border-b border-[#d3d3d3] bg-[#eeeeee] pl-[10px]">
        {[['Layout', 36, 'mr-[14px]', 1], ['Editar', 30, 'mr-[14px]', 1], ['Visão', 28, 'mr-[14px]', 1], ['Itens', 25, 'mr-[14px]', 1], ['Adicionar Item', 78, 'mr-[14px]', 1], ['Atlas', 26, 'mr-[14px]', 0], ['Configurações', 77, '', 0]].map(([t, w, m, u]) => (
          <T key={t} w={w} className={m}>{u ? <><span className="underline underline-offset-2">{t[0]}</span>{t.slice(1)}</> : t}</T>
        ))}
      </div>
      {/* toolbars */}
      <div className={TB + 'h-[39px] border-[#b8b8b8]'}>
        <Grip className="ml-[4px] mr-[2px] w-[6px]" />
        <Cell n="save" /><Sep w="w-2" />
        {['newLayout', 'duplicate', 'manager', 'open', 'saveTpl'].map((n) => <Cell key={n} n={n} />)}
        <Sep w="w-2" /><Cell n="addPage" /><Sep w="w-[5px]" />
        {['print', 'image', 'svg', 'pdf', 'undo', 'redo'].map((n) => <Cell key={n} n={n} />)}
        <Grip className="ml-[8px] mr-[2px] w-[6px]" />
        {['atlas', 'first', 'prev'].map((n) => <Cell key={n} n={n} />)}
        <div className="ml-px flex h-[30px] w-[66px] shrink-0 items-stretch rounded-[3px] border border-[#a8a8a8] text-[#8a8a8a]">
          <div className="flex w-[45px] items-center border-r border-[#b8b8b8] pl-[4px]">1</div>
          <div className="flex flex-1 items-center justify-center rounded-r-[2px] bg-linear-to-b from-white to-[#f0f0f0]"><Tri /></div>
        </div>
        {['next', 'last', 'printOff'].map((n) => <Cell key={n} n={n} />)}
        <div className="ml-px flex">{['exportAtlas', 'atlasCfg'].map((n) => <Cell key={n} n={n} />)}</div>
      </div>
      <div className={TB + 'h-[38px] border-[#b0b0b0]'}>
        <Grip className="ml-[4px] mr-[2px] w-[6px]" />
        {['zin', 'zout', 'z11', 'zfull', 'refresh'].map((n) => <Cell key={n} n={n} />)}
        <Grip className="ml-[8px] mr-[3px] w-[6px]" />
        {['lock', 'unlock', 'group', 'ungroup', 'raise', 'align', 'dist', 'resize'].map((n) => <Cell key={n} n={n} />)}
      </div>
      {/* main */}
      <div className="flex h-[893px] shrink-0">
        <div className="flex w-[39px] shrink-0 flex-col items-center border-r border-[#b4b4b4] bg-linear-to-r from-[#fbfbfb] to-[#eeeeee] pr-px">
          <div className="mb-[3px] mt-[6px] grid w-[17px] shrink-0 grid-cols-6 gap-y-[2px]">{Array.from({ length: 12 }, (_, i) => <div key={i} className="size-px bg-[#b4b4b4]" />)}</div>
          {['hand', 'zoomBox', 'select', 'moveContent', 'editNodes', 'map3d', 'addMap', 'picture', 'label', 'legend', 'scalebar', 'north', 'shape', 'arrow', 'addNode', 'html', 'table', 'manual'].map((n) => (
            <div key={n} className={'flex h-8 w-8 shrink-0 items-center justify-center pl-[2px] ' + (n === 'select' ? 'rounded-[3px] border border-[#b4b4b4] bg-[#dcdcdc]' : '')}><Svg>{I[n]}</Svg></div>
          ))}
        </div>
        <div className="ml-px mt-px flex w-[1249px] shrink-0 flex-col">
          <div className="flex h-[19px] overflow-hidden">{r.top}</div>
          <div className="flex h-[871px]">
            {r.left}
            <div className="relative flex-1 overflow-hidden bg-[#d7d7d7]">
              <div className="absolute left-[83px] top-[61px] h-[760px] w-[1075px] bg-[#969696]" />
              <div className="absolute left-[77px] top-[55px] h-[761px] w-[1076px] bg-white" />
              <RasterMap />
              <H className="left-[116px] top-[88px]" /><H className="left-[609px] top-[88px]" /><H className="left-[1103px] top-[88px]" />
              <H className="left-[116px] top-[430px]" /><H className="left-[1103px] top-[430px]" />
              <H className="left-[116px] top-[771px]" /><H className="left-[609px] top-[771px]" /><H className="left-[1103px] top-[771px]" />
              <svg width="999" height="695" className="absolute left-[116px] top-[88px]"><rect x=".5" y=".5" width="997" height="693" fill="none" stroke="#3a93c8" /><rect x=".5" y=".5" width="997" height="693" fill="none" stroke="#640030" strokeDasharray="4 2" /></svg>
            </div>
          </div>
          <div className="h-px bg-[#b0b0b0]" />
        </div>
        {/* splitter */}
        <div className="flex w-[6px] shrink-0 flex-col items-center justify-center gap-[2px]">{Array.from({ length: 6 }, (_, i) => <div key={i} className="size-px shrink-0 bg-[#b0b0b0]" />)}</div>
        {/* right docks */}
        <div className="flex w-[625px] shrink-0 flex-col">
          <div className="flex h-[25px] items-end">
            <div className="flex h-[24px] w-[50px] items-center justify-center rounded-t-[3px] border border-b-0 border-[#b0b0b0] bg-[#f6f6f6] pr-[3px]"><T w={25}>Itens</T></div>
            <div className="flex h-[21px] w-[109px] items-center justify-center self-end rounded-tr-[3px] border border-l-0 border-[#b4b4b4] bg-[#dcdcdc] pr-[2px]"><T w={86}>Desfazer histórico</T></div>
            <div className="h-px flex-1 bg-[#b4b4b4]" />
          </div>
          <div className="flex h-[20px] items-center justify-between pl-[4px]"><T w={25} className="mt-px">Itens</T><BoxBtns /></div>
          <div className="flex h-[232px] flex-col border border-[#b4b4b4] bg-white">
            <div className="flex h-[20px] shrink-0 items-stretch border-b border-[#b0b0b0] bg-linear-to-b from-white to-[#eaeaea]">
              <div className="flex w-[36px] items-center border-r border-[#ccc] pl-[3px]"><Eye /></div>
              <div className="flex w-[36px] items-center border-r border-[#ccc] pl-[4px]"><svg width="13" height="15" viewBox="0 0 13 15"><path d="M3 8V4.500a3.500 3.500 0 0 1 7 0V8" fill="none" stroke="#888" strokeWidth="1.600" /><rect x=".5" y="7" width="12" height="7.500" rx="1" fill="#5e5e5e" /></svg></div>
              <div className="flex items-center pl-px"><T w={22}>Item</T></div>
            </div>
            <div className="flex h-[18px] items-center pl-[3px]">
              <Check on /><Check className="ml-[22px]" />
              <svg width="14" height="13" viewBox="0 0 14 13" className="ml-[23px]"><rect x=".5" y=".5" width="13" height="12" fill="#d2d2d2" stroke="#999" /><path d="M3 1v11" stroke="#f4f4f4" strokeWidth="1.500" /></svg>
              <T w={40} className="mb-[2px] ml-[7px] font-bold">Mapa 1</T>
            </div>
          </div>
          <div className="flex h-[6px] items-center justify-center gap-[2px]">{Array.from({ length: 6 }, (_, i) => <div key={i} className="size-px bg-[#b4b4b4]" />)}</div>
          <div className="flex h-[24px] items-end">
            <div className="flex h-[22px] w-[57px] items-center justify-center rounded-tl-[3px] border border-r-0 border-[#b4b4b4] bg-[#dcdcdc] pr-[2px]"><T w={34}>Layout</T></div>
            <div className="flex h-[24px] w-[128px] items-center justify-center rounded-t-[3px] border border-b-0 border-[#b0b0b0] bg-[#f6f6f6] pr-[3px]"><T w={104}>Propriedades do Item</T></div>
            <div className="flex h-[22px] w-[49px] items-center justify-center rounded-tr-[3px] border border-l-0 border-[#b4b4b4] bg-[#dcdcdc] pr-[2px]"><T w={27}>Guias</T></div>
            <div className="h-px flex-1 bg-[#b4b4b4]" />
          </div>
          <div className="flex h-[20px] items-center justify-between pl-[4px]"><T w={113}>Propriedades do Item</T><BoxBtns /></div>
          <div className="flex h-[17px] items-center bg-[#c6c6c6] pl-[5px] font-bold"><T w={41}>Mapa 1</T></div>
          <div className="flex h-[31px] items-center pb-px pl-[5px]">
            <Mini w="w-[22px]"><Refresh /></Mini><Sep w="w-[10px]" />
            <Mini w="w-[22px]"><MiniMap />{frame}{inArrow}</Mini><Mini w="w-[28px]"><MiniMap />{frame}{outArrow}</Mini><Sep w="w-[4px]" />
            <Mini w="w-[28px]"><MiniMap />{inArrow}{coords}</Mini><Mini w="w-[24px]"><MiniMap />{outArrow}{coords}</Mini><Sep w="w-[9px]" />
            <Mini w="w-[22px]"><MiniMap /><path d="M12 1h5v9l-2.500 4-2.500-4z" fill="#5c8ac4" stroke="#3c6698" /><path d="M16 20h8l-4 4z" fill="#333" /></Mini>
            <Mini w="w-[26px]"><MiniMap /><path d="M14 3l3.500 4.500h-7zM14 21l3.500-4.500h-7zM6 12l4.500-3.500v7zM22 12l-4.500-3.500v7z" fill="#5c8ac4" stroke="#3c6698" /></Mini><Sep w="w-[8px]" />
            <Mini w="w-[24px]"><path d="M1 12l4-6h18v12H5z" fill="#f8e352" stroke="#b89c10" /><text x="14" y="15.500" fontSize="10" textAnchor="middle" fontWeight="700" fontFamily="Liberation Sans, sans-serif" fill="#444">abc</text></Mini>
          </div>
          {/* scroll area */}
          <div className="flex h-[518px] overflow-hidden border border-[#b4b4b4]">
            <div className="flex w-[609px] shrink-0 flex-col overflow-hidden">
              <Section w={132} className="h-[29px] shrink-0 pt-[8px]">Propriedades Principais</Section>
              <div className="ml-[12px] flex h-[139px] w-[586px] shrink-0 flex-col rounded-[2px] border border-[#d4d4d4] bg-[#ececec] pl-[11px]">
                <div className="mt-[14px] flex h-[22px] items-center"><div className="w-[91px]"><T w={30}>Escala</T></div><Input className="w-[433px]"><T w={41}>1200000</T></Input><Override className="ml-[9px]" /></div>
                <div className="mt-[10px] flex h-[22px] items-center"><div className="w-[91px]"><T w={85}>Rotação do mapa</T></div>
                  <Input className="w-[433px] justify-between"><T w={31}>0,00 °</T><div className="flex h-full w-[14px] flex-col items-center justify-center gap-[4px] border-l border-[#c4c4c4] text-[#555]"><Tri className="rotate-180" /><Tri /></div></Input><Override className="ml-[9px]" /></div>
                <div className="mt-[7px] flex h-[24px] items-center"><div className="w-[91px]"><T w={20}>SRC</T></div>
                  <div className="flex h-[23px] w-[439px] items-center justify-between rounded-[3px] border border-[#aaa] bg-linear-to-b from-white to-[#ececec] pl-[3px] pr-[7px]"><T w={212}>EPSG:31984 - SIRGAS 2000 / UTM zone 24S</T><Tri className="text-[#555]" /></div>
                  <div className="ml-[6px] flex h-[23px] w-[24px] items-center justify-center rounded-[3px] border border-[#b0b0b0] bg-linear-to-b from-white to-[#ececec]"><svg width="17" height="17" viewBox="0 0 17 17"><circle cx="8" cy="8" r="6.500" fill="#9dbcdc" stroke="#8a8f94" /><path d="M2 5.500h12M2 10.500h12M8 1.500v13M5 2.500q-2 5.500 0 11M11 2.500q2 5.500 0 11" stroke="#6d8db0" fill="none" strokeWidth=".8" /><rect x="8.500" y="8.500" width="8" height="8" rx="1.500" fill="#d8b422" /><path d="M10.500 14.500l4-4" stroke="#fff" strokeWidth="1.800" /></svg></div>
                </div>
                <div className="mt-[8px] flex h-[14px] items-center pl-px"><Check on /><T w={153} className="ml-[4px] mt-px">Desenhar itens da tela do mapa</T></div>
              </div>
              <Section w={52} className="h-[24px] shrink-0 pt-[2px]">Camadas</Section>
              <div className="ml-[12px] flex h-[110px] w-[586px] shrink-0 flex-col rounded-[2px] border border-[#d4d4d4] bg-[#ececec] pl-[12px]">
                <div className="mt-[14px] flex h-[22px] items-center"><Check className="mb-[2px]" /><div className="ml-[4px] w-[247px]"><T w={111}>Seguir modelo do mapa</T></div>
                  <div className="flex h-[22px] w-[258px] items-center justify-between rounded-[3px] border border-[#aaa] bg-linear-to-b from-white to-[#ececec] pl-[4px] pr-[7px]"><T w={45}>(nenhum)</T><Tri className="text-[#555]" /></div><Override className="ml-[9px]" /></div>
                <div className="mt-[8px] flex h-[24px] items-center"><Check /><div className="ml-[4px] w-[481px]"><T w={77}>Travar camadas</T></div>
                  <div className="relative flex h-[23px] w-[24px] items-center justify-center rounded-[3px] border border-[#b0b0b0] bg-linear-to-b from-white to-[#ececec]"><Eye blue /><Tri className="absolute bottom-[3px] right-px w-[5px] text-[#444]" /></div><Override className="ml-[9px]" /></div>
                <div className="mt-[8px] flex h-[18px] items-center text-[#8a8a8a]"><Check off className="mb-[2px]" /><T w={150} className="ml-[4px]">Travar estilos para as camadas</T></div>
              </div>
              <Section w={58} className="h-[24px] shrink-0 pt-[2px]">Extensões</Section>
              <div className="ml-[12px] flex h-[149px] w-[586px] shrink-0 flex-col gap-[10px] rounded-[2px] border border-[#d4d4d4] bg-[#ececec] pl-[11px] pt-[14px]">
                {EXTENTS.map(([l, w, v, vw]) => (
                  <div key={l} className="flex h-[22px] items-center"><div className="w-[36px]"><T w={w}>{l}</T></div><Input className="w-[488px] pl-[2px]"><T w={vw}>{v}</T></Input><Override className="ml-[9px]" /></div>
                ))}
              </div>
              <div className="flex h-[27px] shrink-0 items-center pl-[16px] font-bold text-[#8a8a8a]">
                <svg width="7" height="11" viewBox="0 0 7 11" className="mr-[8px]"><path d="M0 0v11l7-5.500z" fill="#aaa" /></svg><Check off /><T w={117} className="ml-[7px]">Controlado por Atlas</T>
              </div>
              <div className="flex h-[24px] shrink-0 items-center pl-[16px] font-bold"><svg width="7" height="11" viewBox="0 0 7 11" className="mr-[9px]"><path d="M0 0v11l7-5.500z" fill="#222" /></svg><T w={40}>Grades</T></div>
            </div>
            <div className="flex w-[14px] flex-col border-l border-[#b4b4b4] bg-[#e2e2e2] text-[#555]">
              <div className="flex h-[13px] items-center justify-center border-b border-[#b8b8b8] bg-[#fafafa]"><Tri className="rotate-180" /></div>
              <div className="h-[327px] border-b border-[#b8b8b8] bg-linear-to-r from-white to-[#f2f2f2]" />
              <div className="mt-auto flex h-[14px] items-center justify-center border-t border-[#b8b8b8] bg-[#fafafa]"><Tri /></div>
            </div>
          </div>
        </div>
      </div>
      {/* status bar */}
      <div className="flex h-[27px] items-center pb-px pl-[6px]">
        <T w={99}>1 item selecionado</T>
        <div className="ml-auto flex items-center">
          <T w={72} className="mr-[34px]">x: 303.491 mm</T><T w={72} className="mr-[34px]">y: 112.118 mm</T><T w={46} className="mr-[61px]">página: 1</T>
          <div className="flex h-[21px] w-[155px] items-stretch rounded-[3px] border border-[#a8a8a8] bg-white">
            <div className="flex flex-1 items-center pl-[3px]"><T w={33}>95.8%</T></div>
            <div className="flex w-[20px] items-center justify-center border-l border-[#b4b4b4] bg-[#f8f8f8] text-[#555]"><Tri /></div>
          </div>
          <div className="ml-[7px] mr-[2px] flex h-[14px] w-[98px] items-center">
            <div className="h-[6px] w-[8px] rounded-l-[2px] border border-[#1a6ab8] bg-[#2a8de8]" />
            <div className="h-[14px] w-[13px] rounded-[3px] border border-[#999] bg-white" />
            <div className="h-[5px] flex-1 rounded-r-[2px] border border-[#a8a8a8] bg-[#ccc]" />
          </div>
        </div>
      </div>
    </div>
  );
}
